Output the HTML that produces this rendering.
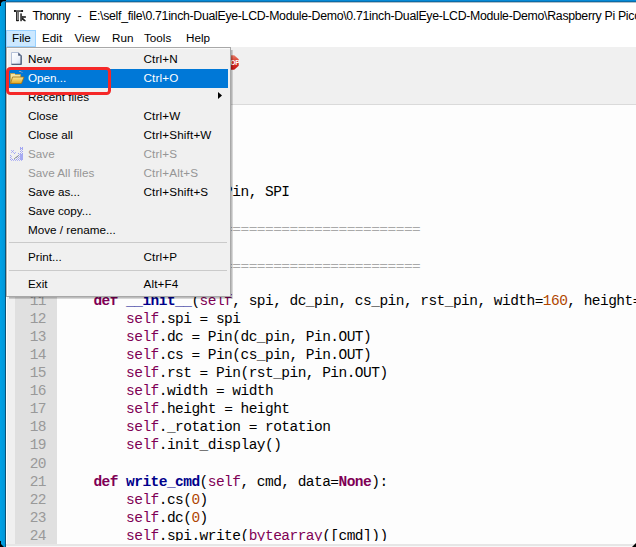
<!DOCTYPE html>
<html><head><meta charset="utf-8">
<style>
*{margin:0;padding:0;box-sizing:border-box}
html,body{width:636px;height:547px;overflow:hidden;background:#fff;position:relative}
body{font-family:"Liberation Sans",sans-serif;font-size:11.7px;color:#000}
.abs{position:absolute}
.t{position:absolute;white-space:pre;line-height:1}
.code{position:absolute;left:60.7px;font-family:"Liberation Mono",monospace;font-size:14.5px;letter-spacing:-0.53px;white-space:pre;line-height:18.08px;color:#000}
.ln{position:absolute;left:29px;width:17px;font-family:"Liberation Mono",monospace;font-size:14.5px;letter-spacing:-0.53px;white-space:pre;line-height:18.08px;color:#999;text-align:right}
.kw{color:#7f0055;font-weight:bold}
.sf{color:#7f0055}
.fn{color:#00008b;font-weight:bold}
.nm{color:#b04600}
.cm{color:#a9a9a9}
.eq{display:inline-block;transform:translateY(1.1px) scaleY(0.76)}
.mi{position:absolute;white-space:pre;line-height:1}
.sc{letter-spacing:0.15px}
.dis{color:#969696}
.wh{color:#fff}
</style></head><body>
<!-- editor -->
<div class="abs" style="left:6px;top:105px;width:630px;height:440px;background:#fdfdfd"></div>
<div class="abs" style="left:6px;top:105px;width:1px;height:442px;background:#fff"></div>
<div class="abs" style="left:7px;top:105px;width:8px;height:440px;background:#f0f0f0"></div>
<div class="abs" style="left:15px;top:105px;width:42px;height:440px;background:#e0e0e0"></div>
<div class="abs" style="left:6px;top:544px;width:630px;height:2px;background:#e6e6e6"></div>
<div class="abs" style="left:6px;top:546px;width:630px;height:1px;background:#f8f8f8"></div>

<div class="abs" style="left:0;top:0;width:636px;height:545px;overflow:hidden"><div class="ln" style="top:111.00px">1</div>
<div class="ln" style="top:129.08px">2</div>
<div class="ln" style="top:147.16px">3</div>
<div class="ln" style="top:165.24px">4</div>
<div class="ln" style="top:183.32px">5</div>
<div class="ln" style="top:201.40px">6</div>
<div class="ln" style="top:219.48px">7</div>
<div class="ln" style="top:237.56px">8</div>
<div class="ln" style="top:255.64px">9</div>
<div class="ln" style="top:273.72px">10</div>
<div class="ln" style="top:291.80px">11</div>
<div class="ln" style="top:309.88px">12</div>
<div class="ln" style="top:327.96px">13</div>
<div class="ln" style="top:346.04px">14</div>
<div class="ln" style="top:364.12px">15</div>
<div class="ln" style="top:382.20px">16</div>
<div class="ln" style="top:400.28px">17</div>
<div class="ln" style="top:418.36px">18</div>
<div class="ln" style="top:436.44px">19</div>
<div class="ln" style="top:454.52px">20</div>
<div class="ln" style="top:472.60px">21</div>
<div class="ln" style="top:490.68px">22</div>
<div class="ln" style="top:508.76px">23</div>
<div class="ln" style="top:526.84px">24</div></div>
<div class="abs" style="left:0;top:0;width:636px;height:541px;overflow:hidden"><div class="code" style="top:183.32px"><span class="kw">from</span> machine <span class="kw">import</span> Pin, SPI</div>
<div class="code" style="top:219.48px"><span class="cm"># <span class="eq" style="transform:translateY(2.3px) scaleY(0.72)">==========================================</span></span></div>
<div class="code" style="top:237.56px"><span class="kw">class</span> <span class="fn">LCD</span>:</div>
<div class="code" style="top:255.64px"><span class="cm"># <span class="eq" style="transform:translateY(2.3px) scaleY(0.72)">==========================================</span></span></div>
<div class="code" style="top:291.80px">    <span class="kw">def</span> <span class="fn">__init__</span>(<span class="sf">self</span>, spi, dc_pin, cs_pin, rst_pin, width<span class="eq">=</span><span class="nm">160</span>, height<span class="eq">=</span><span class="nm">160</span>, rotation<span class="eq">=</span><span class="nm">0</span>):</div>
<div class="code" style="top:309.88px">        <span class="sf">self</span>.spi <span class="eq">=</span> spi</div>
<div class="code" style="top:327.96px">        <span class="sf">self</span>.dc <span class="eq">=</span> Pin(dc_pin, Pin.OUT)</div>
<div class="code" style="top:346.04px">        <span class="sf">self</span>.cs <span class="eq">=</span> Pin(cs_pin, Pin.OUT)</div>
<div class="code" style="top:364.12px">        <span class="sf">self</span>.rst <span class="eq">=</span> Pin(rst_pin, Pin.OUT)</div>
<div class="code" style="top:382.20px">        <span class="sf">self</span>.width <span class="eq">=</span> width</div>
<div class="code" style="top:400.28px">        <span class="sf">self</span>.height <span class="eq">=</span> height</div>
<div class="code" style="top:418.36px">        <span class="sf">self</span>._rotation <span class="eq">=</span> rotation</div>
<div class="code" style="top:436.44px">        <span class="sf">self</span>.init_display()</div>
<div class="code" style="top:472.60px">    <span class="kw">def</span> <span class="fn">write_cmd</span>(<span class="sf">self</span>, cmd, data<span class="eq">=</span><span class="kw">None</span>):</div>
<div class="code" style="top:490.68px">        <span class="sf">self</span>.cs(<span class="nm">0</span>)</div>
<div class="code" style="top:508.76px">        <span class="sf">self</span>.dc(<span class="nm">0</span>)</div>
<div class="code" style="top:526.84px">        <span class="sf">self</span>.spi.write(<span class="sf">bytearray</span>([cmd]))</div></div>

<!-- toolbar -->
<div class="abs" style="left:6px;top:47px;width:630px;height:57px;background:#f0f0f0"></div>
<div class="abs" style="left:6px;top:104px;width:630px;height:1px;background:#dadada"></div>
<!-- stop icon -->
<svg class="abs" style="left:223px;top:55px" width="16" height="15" viewBox="0 0 16 15">
<defs><linearGradient id="sg" x1="0" y1="0" x2="0" y2="1"><stop offset="0" stop-color="#e87a66"/><stop offset="0.45" stop-color="#d83a2c"/><stop offset="1" stop-color="#c41414"/></linearGradient></defs>
<polygon points="4.5,0.3 11.2,0.3 15.7,4.3 15.7,10.7 11.2,14.7 4.5,14.7 0.3,10.7 0.3,4.3" fill="url(#sg)"/>
<text x="8" y="9.8" font-family="Liberation Sans" font-size="6.8" font-weight="bold" fill="#fff" text-anchor="middle" letter-spacing="-0.3">STOP</text>
</svg>

<!-- window border -->
<div class="abs" style="left:0;top:0;width:636px;height:1px;background:#078ad6"></div>
<div class="abs" style="left:0;top:1px;width:636px;height:1px;background:#0a6ca8"></div>
<div class="abs" style="left:6px;top:2px;width:630px;height:1px;background:#b4c0c8"></div>
<div class="abs" style="left:0;top:2px;width:5px;height:545px;background:linear-gradient(90deg,#00a2e6,#0096d8)"></div>
<div class="abs" style="left:5px;top:2px;width:1px;height:545px;background:#0a5278"></div>
<svg class="abs" style="left:0;top:0" width="6" height="6"><polygon points="0,0 6,0 6,1 3,1 1,3 1,6 0,6" fill="#000"/></svg>
<svg class="abs" style="left:0;top:541px" width="4" height="6"><polygon points="0,0 1,0 1,3 4,6 0,6" fill="#000"/></svg>
<svg class="abs" style="left:632px;top:543px" width="4" height="4"><polygon points="4,0 4,4 0,4" fill="#000"/></svg>

<!-- title -->
<svg class="abs" style="left:10px;top:6px" width="20" height="20" viewBox="0 0 20 20">
<rect x="4.2" y="4" width="8.6" height="1.9" fill="#3c3c3c"/>
<rect x="5.5" y="4" width="6" height="0.8" fill="#777"/>
<circle cx="4.9" cy="4.95" r="1" fill="#111"/><circle cx="12.2" cy="4.95" r="1" fill="#111"/>
<rect x="6.1" y="5.9" width="2.8" height="9" fill="#a8a8a8"/>
<rect x="6.1" y="5.9" width="1.1" height="9" fill="#1e1e1e"/>
<rect x="8.2" y="5.9" width="0.7" height="9" fill="#555"/>
<path d="M6.1,14 H8.9 V14.6 Q8.9,15.2 8.3,15.2 H6.7 Q6.1,15.2 6.1,14.6 Z" fill="#1e1e1e"/>
<rect x="10.3" y="7.4" width="1.5" height="7.8" fill="#1e1e1e"/>
<rect x="11.8" y="10" width="3.9" height="2" fill="#1e1e1e"/>
<rect x="12.3" y="10.6" width="2.8" height="0.8" fill="#8a8a8a"/>
<polygon points="11.8,12 13.2,12 15.7,14.4 15.7,15.2 14.3,15.2 11.8,13.4" fill="#1e1e1e"/>
</svg>
<div class="t" style="left:32.5px;top:10px;font-size:12.3px;letter-spacing:-0.55px">Thonny</div>
<div class="t" style="left:77.6px;top:10px;font-size:12.3px">-</div>
<div class="t" style="left:89px;top:10px;font-size:12.3px;letter-spacing:-0.29px">E:\self_file\0.71inch-DualEye-LCD-Module-Demo\0.71inch-DualEye-LCD-Module-Demo\Raspberry Pi Pico\</div>

<!-- menubar -->
<div class="abs" style="left:6px;top:30px;width:30px;height:17px;background:#cce8ff;border:1px solid #99d1ff"></div>
<div class="t" style="left:12px;top:32px;">File</div>
<div class="t" style="left:42px;top:32px;">Edit</div>
<div class="t" style="left:74.5px;top:32px;">View</div>
<div class="t" style="left:112px;top:32px;">Run</div>
<div class="t" style="left:144px;top:32px;">Tools</div>
<div class="t" style="left:186px;top:32px;">Help</div>

<!-- dropdown menu -->
<div class="abs" style="left:231px;top:50px;width:2px;height:249px;background:linear-gradient(90deg,rgba(0,0,0,0.30),rgba(0,0,0,0.10));"></div>
<div class="abs" style="left:9px;top:297px;width:222px;height:2px;background:linear-gradient(180deg,rgba(0,0,0,0.30),rgba(0,0,0,0.10));"></div>
<div class="abs" style="left:6px;top:47px;width:225px;height:250px;background:#f0f0f0;border:1px solid #a8a8a8;border-left-color:#b8b2ac;box-shadow:inset 1px 1px 0 #fafafa"></div>
<div class="abs" style="left:9px;top:68.5px;width:219px;height:19px;background:#0078d7"></div>
<!-- new icon -->
<svg class="abs" style="left:11px;top:52px" width="11" height="13" viewBox="0 0 11 13">
<defs><linearGradient id="ng" x1="0" y1="0" x2="1" y2="1"><stop offset="0" stop-color="#ffffff"/><stop offset="0.6" stop-color="#eef2fa"/><stop offset="1" stop-color="#c4d0ea"/></linearGradient></defs>
<path d="M0.5,0.5 H7.5 L10.5,3.5 V12.5 H0.5 Z" fill="url(#ng)" stroke="#b4c0d8" stroke-width="1"/>
<path d="M7.2,0.5 L10.5,3.8 H7.2 Z" fill="#4a5a78"/>
<path d="M0.5,12.2 H10.6 M10.1,3.5 V12.6" stroke="#34425e" stroke-width="1.1"/>
</svg>
<!-- folder icon -->
<svg class="abs" style="left:10px;top:70px" width="15" height="15" viewBox="0 0 15 15">
<defs><linearGradient id="fg" x1="0" y1="0" x2="0" y2="1"><stop offset="0" stop-color="#fbe79a"/><stop offset="1" stop-color="#e0a820"/></linearGradient></defs>
<path d="M0.5,3.5 H4.5 L5.5,4.5 H10.5 V13.5 H0.5 Z" fill="#f6e3a0" stroke="#c8a040" stroke-width="0.8"/>
<path d="M2.5,7 H14 L11.5,13.5 H0.5 Z" fill="url(#fg)" stroke="#a07010" stroke-width="0.8"/>
<path d="M9,1.5 L11,1.5 L12.5,3" stroke="#8aa0c0" stroke-width="1" fill="none"/>
</svg>
<!-- save disabled icon -->
<svg class="abs" style="left:10px;top:147px" width="14" height="14" viewBox="0 0 14 14" shape-rendering="crispEdges">
<defs><pattern id="chk" width="2" height="2" patternUnits="userSpaceOnUse"><rect x="0" y="0" width="1" height="1" fill="#9fa3f2"/><rect x="1" y="1" width="1" height="1" fill="#b4b7f4"/></pattern></defs>
<g fill="url(#chk)">
<rect x="10" y="0" width="3" height="14"/><rect x="8" y="6" width="3" height="8"/><rect x="6" y="9" width="2" height="5"/>
<rect x="1" y="12" width="7" height="2"/><rect x="0" y="8" width="2" height="5"/><rect x="1" y="3" width="3" height="3"/><rect x="4" y="5" width="2" height="2"/>
</g>
<g fill="#a6aaf2"><rect x="10" y="1" width="3" height="1"/><rect x="10" y="7" width="3" height="6"/></g>
<path d="M4.2,11.8 L8.5,8.6" stroke="#7d857a" stroke-width="0.9" fill="none" shape-rendering="auto"/>
</svg>

<div class="mi" style="left:28px;top:53px">New</div><div class="mi sc" style="left:143.5px;top:53px">Ctrl+N</div>
<div class="mi wh" style="left:28px;top:72px">Open...</div><div class="mi sc wh" style="left:143.5px;top:72px">Ctrl+O</div>
<div class="mi" style="left:28px;top:91px">Recent files</div>
<svg class="abs" style="left:218px;top:92px" width="4" height="7"><polygon points="0,0 4,3.5 0,7" fill="#000"/></svg>
<div class="mi" style="left:28px;top:110px">Close</div><div class="mi sc" style="left:143.5px;top:110px">Ctrl+W</div>
<div class="mi" style="left:28px;top:129px">Close all</div><div class="mi sc" style="left:143.5px;top:129px">Ctrl+Shift+W</div>
<div class="mi dis" style="left:28px;top:148px">Save</div><div class="mi sc dis" style="left:143.5px;top:148px">Ctrl+S</div>
<div class="mi dis" style="left:28px;top:167px">Save All files</div><div class="mi sc dis" style="left:143.5px;top:167px">Ctrl+Alt+S</div>
<div class="mi" style="left:28px;top:186px">Save as...</div><div class="mi sc" style="left:143.5px;top:186px">Ctrl+Shift+S</div>
<div class="mi" style="left:28px;top:205px">Save copy...</div>
<div class="mi" style="left:28px;top:224px">Move / rename...</div>
<div class="abs" style="left:9px;top:242px;width:218px;height:1px;background:#cacaca"></div>
<div class="mi" style="left:28px;top:251px">Print...</div><div class="mi sc" style="left:143.5px;top:251px">Ctrl+P</div>
<div class="abs" style="left:9px;top:270px;width:218px;height:1px;background:#cacaca"></div>
<div class="mi" style="left:28px;top:278px">Exit</div><div class="mi sc" style="left:143.5px;top:278px">Alt+F4</div>
<!-- red box -->
<div class="abs" style="left:5.5px;top:67px;width:105px;height:27.5px;border:3px solid #f52828;border-radius:4.5px"></div>
</body></html>
